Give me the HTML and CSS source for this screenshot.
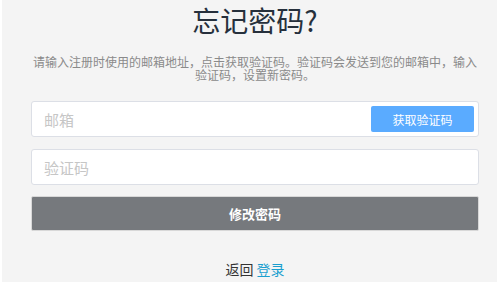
FILE: index.html
```html
<!DOCTYPE html>
<html lang="zh-CN">
<head>
    <meta charset="UTF-8">
    <meta name="viewport" content="width=device-width, initial-scale=1.0">
    <title>忘记密码</title>
    <link rel="stylesheet" href="styles.css">
</head>
<body>
    <div class="page">
        <h1 class="title">忘记密码?</h1>
        <p class="desc">请输入注册时使用的邮箱地址，点击获取验证码。验证码会发送到您的邮箱中，输入验证码，设置新密码。</p>
        <form class="reset-form">
            <div class="field">
                <input type="text" name="email" placeholder="邮箱">
                <button type="button" class="code-btn">获取验证码</button>
            </div>
            <div class="field">
                <input type="text" name="code" placeholder="验证码">
            </div>
            <button type="submit" class="submit-btn">修改密码</button>
        </form>
        <div class="back">返回 <a href="#">登录</a></div>
    </div>
</body>
</html>
```

FILE: styles.css
```css
body {
    margin: 0;
    padding: 0;
    background: #ffffff;
    font-family: "Noto Sans CJK SC", "Noto Sans", sans-serif;
}
.page {
    background: #f4f4f4;
    margin: 0 3px 0 2px;
    height: 282px;
    padding: 0 18px 0 29px;
    box-sizing: border-box;
    overflow: hidden;
}
.title {
    margin: 0;
    font-size: 28px;
    font-weight: normal;
    line-height: 40px;
    color: #26303c;
    text-align: center;
}
.desc {
    margin: 15px 0 0 0;
    font-size: 12px;
    line-height: 13px;
    color: #8a8a8a;
    text-align: center;
}
.reset-form {
    margin-top: 20px;
}
.field {
    display: flex;
    align-items: center;
    height: 36px;
    background: #ffffff;
    border: 1px solid #dcdfe6;
    border-radius: 3px;
    box-sizing: border-box;
    padding: 0 4px 0 12px;
    margin-bottom: 12px;
}
.field input {
    flex: 1;
    border: none;
    outline: none;
    background: transparent;
    font-family: inherit;
    font-size: 15px;
    color: #333;
    padding: 0;
}
.field input::placeholder {
    color: #c6c6c6;
}
.code-btn {
    width: 103px;
    height: 26px;
    border: none;
    border-radius: 2px;
    background: #5aabff;
    color: #ffffff;
    font-family: inherit;
    font-size: 12px;
}
.submit-btn {
    display: block;
    width: 100%;
    height: 35px;
    margin-top: -1px;
    border: 1px solid #d8d8d8;
    border-radius: 2px;
    background: #76797d;
    color: #ffffff;
    font-family: inherit;
    font-size: 13px;
    font-weight: bold;
}
.back {
    margin-top: 30px;
    text-align: center;
    font-size: 14px;
    line-height: 16px;
    color: #333;
}
.back a {
    color: #1a9fcf;
    text-decoration: none;
}
```
